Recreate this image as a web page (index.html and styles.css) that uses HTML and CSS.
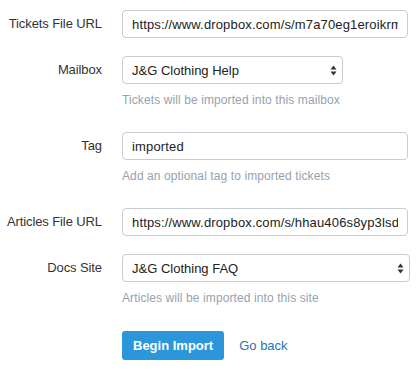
FILE: index.html
```html
<!DOCTYPE html>
<html lang="en">
<head>
  <meta charset="UTF-8" />
  <meta name="viewport" content="width=device-width, initial-scale=1.0"/>
  <title>Import</title>
  <link rel="stylesheet" href="styles.css">
</head>
<body>

<form class="import-form">
  <div class="form-row">
    <label class="form-label">Tickets File URL</label>
    <div class="form-field">
      <input class="text-input" type="text" value="https://www.dropbox.com/s/m7a70eg1eroikrm/tickets.csv">
    </div>
  </div>

  <div class="form-row">
    <label class="form-label">Mailbox</label>
    <div class="form-field">
      <div class="select-wrap select-short">
        <select class="select-input">
          <option>J&amp;G Clothing Help</option>
        </select>
        <svg class="select-arrows" width="7" height="11" viewBox="0 0 7 11"><path d="M3.5 0.5 L6.5 4.5 L0.5 4.5 Z M3.5 10.5 L6.5 6.5 L0.5 6.5 Z" fill="#333"/></svg>
      </div>
      <p class="help-text">Tickets will be imported into this mailbox</p>
    </div>
  </div>

  <div class="form-row">
    <label class="form-label">Tag</label>
    <div class="form-field">
      <input class="text-input" type="text" value="imported">
      <p class="help-text">Add an optional tag to imported tickets</p>
    </div>
  </div>

  <div class="form-row">
    <label class="form-label">Articles File URL</label>
    <div class="form-field">
      <input class="text-input" type="text" value="https://www.dropbox.com/s/hhau406s8yp3lsd/articles.csv">
    </div>
  </div>

  <div class="form-row">
    <label class="form-label">Docs Site</label>
    <div class="form-field">
      <div class="select-wrap select-wide">
        <select class="select-input">
          <option>J&amp;G Clothing FAQ</option>
        </select>
        <svg class="select-arrows" width="7" height="11" viewBox="0 0 7 11"><path d="M3.5 0.5 L6.5 4.5 L0.5 4.5 Z M3.5 10.5 L6.5 6.5 L0.5 6.5 Z" fill="#333"/></svg>
      </div>
      <p class="help-text">Articles will be imported into this site</p>
    </div>
  </div>

  <div class="form-row actions">
    <div class="form-label"></div>
    <div class="form-field action-bar">
      <button type="button" class="primary-btn">Begin Import</button>
      <a href="#" class="back-link">Go back</a>
    </div>
  </div>
</form>

</body>
</html>
```

FILE: styles.css
```css
* {
  box-sizing: border-box;
}

body {
  margin: 0;
  background: #fff;
  color: #333;
  font-family: "Liberation Sans", Arial, sans-serif;
  font-size: 13px;
}

.import-form {
  padding-top: 10px;
  width: 416px;
}

.form-row {
  display: flex;
  align-items: flex-start;
  margin-bottom: 18px;
}

.form-label {
  width: 102px;
  flex-shrink: 0;
  text-align: right;
  line-height: 28px;
  color: #333;
  letter-spacing: -0.1px;
}

.form-field {
  margin-left: 20px;
  width: 286px;
}

.text-input,
.select-input {
  display: block;
  width: 100%;
  height: 28px;
  padding: 0 9px;
  border: 1px solid #c4ccd4;
  border-radius: 4px;
  background: #fff;
  color: #222;
  font-family: inherit;
  font-size: 13px;
  outline: none;
}

.text-input {
  letter-spacing: 0.15px;
}

.select-wrap {
  position: relative;
}

.select-short {
  width: 221px;
}

.select-wide {
  width: 288px;
}

.select-input {
  -webkit-appearance: none;
  appearance: none;
  padding-right: 24px;
}

.select-arrows {
  position: absolute;
  right: 6px;
  top: 9px;
  pointer-events: none;
}

.help-text {
  margin: 7px 0 5px;
  line-height: 18px;
  font-size: 12px;
  letter-spacing: 0.1px;
  color: #95a2af;
}

.action-bar {
  display: flex;
  align-items: center;
  gap: 15px;
  margin-top: 1px;
}

.primary-btn {
  height: 29px;
  padding: 0 11px;
  border: 0;
  border-radius: 3px;
  background: #2b97da;
  color: #fff;
  font-family: inherit;
  font-size: 13px;
  font-weight: bold;
  cursor: pointer;
}

.back-link {
  color: #2574b6;
  text-decoration: none;
}
```
